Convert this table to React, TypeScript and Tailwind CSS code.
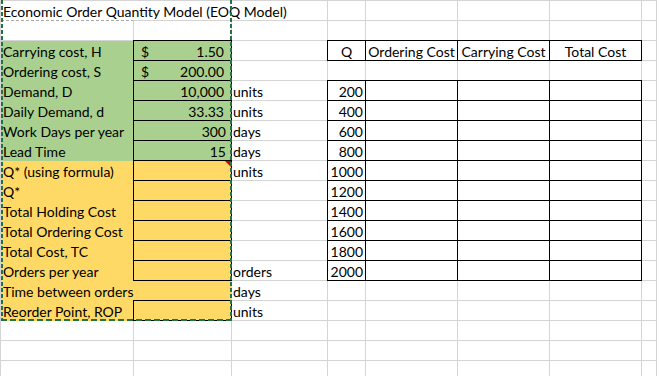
import type { ReactNode } from 'react';

const G = 'border-r-[#d4d4d4]';
const GB = 'border-b-[#d4d4d4]';
const GREEN = 'bg-[#a9d08e]';
const YELLOW = 'bg-[#ffd966]';

type CellProps = {
  children?: ReactNode;
  r?: string;
  b?: string;
  box?: boolean;
  className?: string;
};

// one spreadsheet cell; "box" gives it a black border on all four sides
function Cell({ children, r = G, b = GB, box = false, className = '' }: CellProps) {
  const lines = box
    ? 'relative z-10 border-r-black border-b-black shadow-[0_-1px_0_#000,-1px_0_0_#000,-1px_-1px_0_#000]'
    : `${r} ${b}`;
  return (
    <div className={`border-r border-b whitespace-nowrap pt-[2px] leading-[17px] ${lines} ${className}`}>
      {children}
    </div>
  );
}

const inputs = [
  { label: 'Carrying cost, H', dollar: true, value: '1.50', unit: '' },
  { label: 'Ordering cost, S', dollar: true, value: '200.00', unit: '' },
  { label: 'Demand, D', value: '10,000', unit: 'units' },
  { label: 'Daily Demand, d', value: '33.33', unit: 'units' },
  { label: 'Work Days per year', value: '300', unit: 'days', general: true },
  { label: 'Lead Time', value: '15', unit: 'days', general: true },
];

const outputs = [
  { label: 'Q* (using formula)', unit: 'units', note: true },
  { label: 'Q*', unit: '' },
  { label: 'Total Holding Cost', unit: '' },
  { label: 'Total Ordering Cost', unit: '' },
  { label: 'Total Cost, TC', unit: '' },
  { label: 'Orders per year', unit: 'orders' },
];

const quantities = ['200', '400', '600', '800', '1000', '1200', '1400', '1600', '1800', '2000'];

function TableCells({ row }: { row: number }) {
  // row index 3..19 in sheet terms
  if (row === 3) {
    return (
      <>
        <Cell box className="text-center">Q</Cell>
        <Cell box className="text-center">Ordering Cost</Cell>
        <Cell box className="text-center">Carrying Cost</Cell>
        <Cell box className="text-center">Total Cost</Cell>
        <Cell />
      </>
    );
  }
  const q = row >= 5 && row <= 14 ? quantities[row - 5] : null;
  if (q) {
    return (
      <>
        <Cell box className="text-right pr-[2px]">{q}</Cell>
        <Cell box />
        <Cell box />
        <Cell box />
        <Cell />
      </>
    );
  }
  return (
    <>
      <Cell />
      <Cell />
      <Cell />
      <Cell />
      <Cell />
    </>
  );
}

export default function App() {
  return (
    <div className="w-[657px] h-[376px] overflow-hidden bg-white">
      <div className="relative grid grid-cols-[133px_98px_96px_38px_92px_92px_92px_1fr] auto-rows-[20px] border-l border-t border-[#d4d4d4] font-['Lato',sans-serif] text-[14px] text-black">
        {/* row 1: title overflows across B and C */}
        <Cell r="border-r-transparent" b="border-b-[#a8a8a8]" className="border-dashed pl-[2px] overflow-visible">
          Economic Order Quantity Model (EOQ Model)
        </Cell>
        <Cell r="border-r-transparent" />
        <Cell />
        <TableCells row={1} />

        {/* row 2 */}
        <Cell />
        <Cell />
        <Cell />
        <TableCells row={2} />

        {/* inputs, green */}
        {inputs.map((item, i) => (
          <div key={item.label} className="contents">
            <Cell r="border-r-[#a9d08e]" b="border-b-[#a9d08e]" className={`${GREEN} pl-[2px]`}>
              {item.label}
            </Cell>
            {item.dollar ? (
              <Cell box className={`${GREEN} flex justify-between pl-[7px] pr-[7px]`}>
                <span>$</span>
                <span>{item.value}</span>
              </Cell>
            ) : (
              <Cell box className={`${GREEN} text-right ${item.general ? 'pr-[5px]' : 'pr-[7px]'}`}>
                {item.value}
              </Cell>
            )}
            <Cell className="pl-[1px]">{item.unit}</Cell>
            <TableCells row={i + 3} />
          </div>
        ))}

        {/* outputs, yellow */}
        {outputs.map((item, i) => (
          <div key={item.label} className="contents">
            <Cell r="border-r-[#ffd966]" b="border-b-[#ffd966]" className={`${YELLOW} pl-[2px]`}>
              {item.label}
            </Cell>
            <Cell box className={YELLOW}>
              {item.note && (
                <span className="absolute top-0 right-0 w-0 h-0 border-t-[6px] border-l-[6px] border-t-[#e00000] border-l-transparent" />
              )}
            </Cell>
            <Cell className="pl-[1px]">{item.unit}</Cell>
            <TableCells row={i + 9} />
          </div>
        ))}

        {/* row 15 */}
        <Cell r="border-r-[#ffd966]" b="border-b-[#ffd966]" className={`${YELLOW} pl-[2px] overflow-visible`}>
          Time between orders
        </Cell>
        <Cell r="border-r-[#ffd966]" b="border-b-[#ffd966]" className={YELLOW} />
        <Cell className="pl-[1px]">days</Cell>
        <TableCells row={15} />

        {/* row 16 */}
        <Cell r="border-r-[#ffd966]" b="border-b-[#ffd966]" className={`${YELLOW} pl-[2px]`}>
          Reorder Point, ROP
        </Cell>
        <Cell box className={YELLOW} />
        <Cell className="pl-[1px]">units</Cell>
        <TableCells row={16} />

        {[17, 18, 19].map((r) => (
          <div key={r} className="contents">
            <Cell />
            <Cell />
            <Cell />
            <TableCells row={r} />
          </div>
        ))}

        {/* copy marquee around A1:B16 */}
        <svg className="absolute left-[-1px] top-[-1px] z-20 pointer-events-none" width="234" height="323">
          <line x1="2" y1="0" x2="2" y2="321" stroke="#217346" strokeWidth="2" strokeDasharray="4 2" />
          <line x1="231" y1="0" x2="231" y2="321" stroke="#217346" strokeWidth="2" strokeDasharray="4 2" />
          <line x1="1" y1="320" x2="232" y2="320" stroke="#217346" strokeWidth="2" strokeDasharray="6 3" />
        </svg>
      </div>
    </div>
  );
}
